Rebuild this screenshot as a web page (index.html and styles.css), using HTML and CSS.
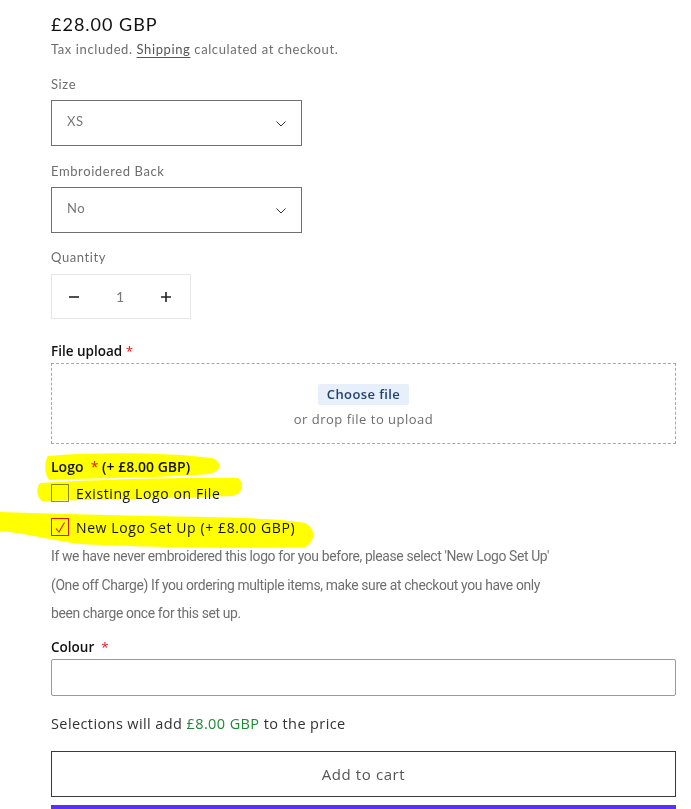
FILE: index.html
```html
<!DOCTYPE html>
<html lang="en">
<head>
<meta charset="utf-8">
<title>Product form</title>
<link rel="stylesheet" href="styles.css">
</head>
<body>
<div class="page">
  <svg class="marker" width="691" height="809" viewBox="0 0 691 809" aria-hidden="true">
    <path d="M48,456 C90,452 170,452 212,458 C223,462 222,471 209,474 C160,478 90,478 50,480 C44,476 44,461 48,456 Z"/>
    <path d="M40,483 C90,480 180,477 238,478 C245,483 243,494 232,496 C170,498 100,500 42,501 C36,497 36,487 40,483 Z"/>
    <path d="M0,512 C40,513 90,515 150,516 C220,517 280,518 305,523 C316,528 316,541 305,547 C240,549 140,547 80,544 C50,540 25,533 0,531 Z"/>
  </svg>

  <div class="form">
    <div class="price">£28.00 GBP</div>
    <div class="tax">Tax included. <span class="link">Shipping</span> calculated at checkout.</div>

    <div class="field-label first">Size</div>
    <div class="select">
      <span class="select-value">XS</span>
      <svg class="chevron" width="10" height="6" viewBox="0 0 10 6"><path d="M0.5 0.5 L5 5 L9.5 0.5"/></svg>
    </div>

    <div class="field-label">Embroidered Back</div>
    <div class="select">
      <span class="select-value">No</span>
      <svg class="chevron" width="10" height="6" viewBox="0 0 10 6"><path d="M0.5 0.5 L5 5 L9.5 0.5"/></svg>
    </div>

    <div class="field-label qty-label">Quantity</div>
    <div class="qty">
      <span class="qty-btn"><svg width="10" height="10" viewBox="0 0 10 10"><path d="M0 5 H10"/></svg></span>
      <span class="qty-val">1</span>
      <span class="qty-btn"><svg width="10" height="10" viewBox="0 0 10 10"><path d="M0 5 H10 M5 0 V10"/></svg></span>
    </div>

    <div class="opt-label upload-label">File upload <span class="req">*</span></div>
    <div class="dropzone">
      <span class="choose">Choose file</span>
      <span class="drop-text">or drop file to upload</span>
    </div>

    <div class="logo-label">Logo &nbsp;<span class="req">*</span> (+ £8.00 GBP)</div>
    <div class="check-row first-check">
      <span class="box"></span>
      <span class="check-text">Existing Logo on File</span>
    </div>
    <div class="check-row second-check">
      <span class="box checked"><svg width="15" height="15" viewBox="0 0 15 15"><path d="M3 8.5 L6 12 L11.5 2.5"/></svg></span>
      <span class="check-text">New Logo Set Up (+ £8.00 GBP)</span>
    </div>
    <p class="help">If we have never embroidered this logo for you before, please select 'New Logo Set Up' (One off Charge) If you ordering multiple items, make sure at checkout you have only been charge once for this set up.</p>

    <div class="opt-label colour-label">Colour &nbsp;<span class="req">*</span></div>
    <div class="text-input"></div>

    <div class="selections">Selections will add <span class="green">£8.00 GBP</span> to the price</div>

    <div class="cart-btn">Add to cart</div>
    <div class="pay-bar"></div>
  </div>
</div>
</body>
</html>
```

FILE: styles.css
```css
* { box-sizing: border-box; }
html, body { margin: 0; padding: 0; background: #fff; }
.page { position: relative; width: 691px; height: 809px; overflow: hidden; }
.marker { position: absolute; left: 0; top: 0; pointer-events: none; mix-blend-mode: multiply; z-index: 2; }
.marker path { fill: #ffff00; }

.form { padding: 9px 15px 0 51px; width: 691px; }

.price {
  font-family: Lato, "Open Sans", sans-serif;
  font-size: 18px; font-weight: 400; line-height: 30px; letter-spacing: 1px; color: #121212;
}
.tax {
  font-family: Lato, "Open Sans", sans-serif;
  font-size: 13px; line-height: 20px; letter-spacing: 0.6px; color: #6e6e6e;
}
.link { color: #555; text-decoration: underline; text-underline-offset: 3px; text-decoration-thickness: 1px; }

.field-label {
  font-family: Lato, "Open Sans", sans-serif;
  font-size: 13px; line-height: 20px; letter-spacing: 0.6px; color: #6e6e6e;
  margin-top: 15px;
}
.qty-label { margin-top: 14px; }

.select {
  width: 251px; height: 46px; margin-top: 6px;
  border: 1px solid #6f6f6f;
  display: flex; align-items: center; justify-content: space-between;
  padding: 0 15px 0 15px;
}
.select-value {
  font-family: Lato, "Open Sans", sans-serif;
  font-size: 13px; letter-spacing: 0.6px; color: #777;
  margin-top: -4px;
}
.chevron { margin-top: 2px; }
.chevron path { fill: none; stroke: #333; stroke-width: 1; }

.qty {
  width: 140px; height: 45px; margin-top: 7px;
  border: 1px solid #e6e6e6;
  display: flex; align-items: center; justify-content: space-between;
  padding: 0 19px 0 17px;
}
.qty-btn { display: flex; }
.qty-btn path { stroke: #222; stroke-width: 1.6; fill: none; }
.qty-val {
  font-family: Lato, "Open Sans", sans-serif;
  font-size: 14px; color: #777;
}

.opt-label {
  font-family: "Open Sans", sans-serif;
  font-size: 13.5px; font-weight: 600; line-height: 20px; color: #111;
}
.upload-label { margin-top: 22px; }
.req { color: #e8141b; font-weight: 400; }

.dropzone {
  width: 625px; height: 81px; margin-top: 2px;
  border: 1px dashed #a8a8a8;
  display: flex; flex-direction: column; align-items: center;
  padding-top: 20px;
  font-family: "Open Sans", sans-serif;
}
.choose {
  background: #e7effb; color: #23426f;
  font-size: 13px; font-weight: 600; letter-spacing: 0.4px;
  height: 21px; line-height: 21px; padding: 0 9px;
  border-radius: 2px;
}
.drop-text { font-size: 13px; color: #6d6d6d; letter-spacing: 0.5px; margin-top: 5px; line-height: 18px; }

.logo-label {
  font-family: "Open Sans", sans-serif;
  font-size: 14px; font-weight: 600; line-height: 20px; color: #111;
  margin-top: 13px;
}
.logo-label .req { font-weight: 400; }

.check-row { display: flex; align-items: center; height: 20px; gap: 7px; }
.first-check { margin-top: 6px; }
.second-check { margin-top: 14px; }
.box {
  width: 18px; height: 18px; border: 1px solid #8a8a8a; background: transparent;
  display: flex; align-items: center; justify-content: center;
}
.box.checked { border-color: #e3141b; }
.box svg path { fill: none; stroke: #e3141b; stroke-width: 1.1; }
.check-text {
  font-family: "Open Sans", sans-serif;
  font-size: 14px; color: #111; letter-spacing: 0.6px;
}

.help {
  margin: 5px 0 0;
  font-family: Roboto, "Open Sans", sans-serif;
  font-size: 13.9px; line-height: 28.5px; color: #6f6f6f; letter-spacing: -0.36px;
  width: 515px;
}

.colour-label { margin-top: 9px; }
.text-input {
  width: 625px; height: 37px; margin-top: 2px;
  border: 1px solid #9a9a9a; border-radius: 2px;
}

.selections {
  margin-top: 18px;
  font-family: "Open Sans", sans-serif;
  font-size: 14.5px; line-height: 20px; color: #333; letter-spacing: 0.4px;
}
.green { color: #1f8a35; }

.cart-btn {
  margin-top: 17px; width: 625px; height: 46px;
  border: 1px solid #3a3a3a;
  display: flex; align-items: center; justify-content: center;
  font-family: "Open Sans", sans-serif;
  font-size: 15px; color: #555; letter-spacing: 0.6px;
}
.pay-bar { margin-top: 8px; width: 625px; height: 6px; background: #5a31f4; }
```
